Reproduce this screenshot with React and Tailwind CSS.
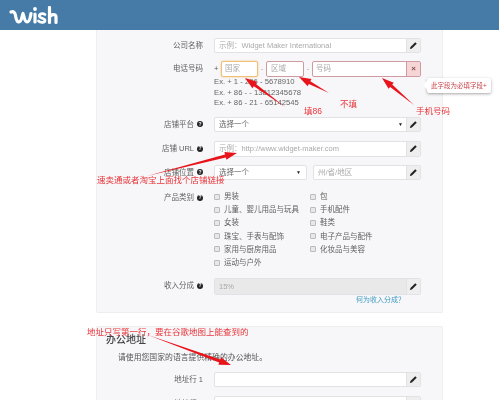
const cjk = { fontFamily: '"Liberation Sans","Noto Sans CJK SC",sans-serif' };

function Pencil() {
  return (
    <svg width="9" height="9" viewBox="0 0 10 10" aria-hidden="true">
      <path d="M1 9 L1.6 6.8 L7 1.4 L8.6 3 L3.2 8.4 Z" fill="#222" />
    </svg>
  );
}

function Help() {
  return (
    <span className="ml-[3px] inline-flex h-[6px] w-[6px] items-center justify-center rounded-full bg-[#222] text-[5px] leading-none font-bold text-white">?</span>
  );
}

function Row({ label, help, children, className = "" }) {
  return (
    <div className={"flex items-start " + className}>
      <div className="flex h-[15.5px] w-[106px] items-center justify-end text-[7.5px] text-[#5f5f5f]">
        {label}
        {help && <Help />}
      </div>
      <div className="ml-[11px] w-[207px]">{children}</div>
    </div>
  );
}

function Field({ text, select, disabled, height = "h-[15.5px]" }) {
  return (
    <div className={"flex overflow-hidden rounded-[2px] border border-[#e2e2e6] bg-white " + height}>
      <div className={"flex flex-1 items-center justify-between pl-[4px] pr-[3px] text-[7.5px] " + (disabled ? "bg-[#e9e9e9] text-[#888] " : "") + (select ? "text-[#666]" : "text-[#aaa]")}>
        <span>{text}</span>
        {select && <span className="text-[5px] text-[#222]">▼</span>}
      </div>
      <div className="flex w-[14px] items-center justify-center border-l border-[#e2e2e6] bg-[#eeeeee]">
        <Pencil />
      </div>
    </div>
  );
}

function Check({ label }) {
  return (
    <div className="flex h-[13.2px] items-center text-[7.5px] text-[#5f5f5f]">
      <span className="mr-[4px] h-[6px] w-[6px] rounded-[1px] border border-[#bbb] bg-[#e8e8e8]" />
      {label}
    </div>
  );
}

const left = ["男装", "儿童、婴儿用品与玩具", "女装", "珠宝、手表与配饰", "家用与厨房用品", "运动与户外"];
const right = ["包", "手机配件", "鞋类", "电子产品与配件", "化妆品与美容"];

function Arrow({ x1, y1, x2, y2 }) {
  const dx = x2 - x1, dy = y2 - y1, l = Math.hypot(dx, dy);
  const ux = dx / l, uy = dy / l, nx = -uy, ny = ux;
  const bx = x2 - ux * 12, by = y2 - uy * 12;
  const p = [
    [x1, y1],
    [bx + nx * 1.6, by + ny * 1.6],
    [bx + nx * 4, by + ny * 4],
    [x2, y2],
    [bx - nx * 4, by - ny * 4],
    [bx - nx * 1.6, by - ny * 1.6],
  ].map((q) => q.map((v) => v.toFixed(1)).join(",")).join(" ");
  return <polygon points={p} fill="#e8141c" />;
}

function Note({ className, children }) {
  return <div className={"absolute whitespace-nowrap text-[8.5px] leading-none text-[#e8343a] " + className}>{children}</div>;
}

export default function App() {
  return (
    <div className="relative h-[400px] w-[499px] overflow-hidden bg-white blur-[0.3px]" style={cjk}>
      <header className="flex h-[30px] items-center bg-[#457ba6] pl-[9px]">
        <svg width="49" height="19" viewBox="0 0 49 19" fill="none" stroke="#fff" strokeLinecap="round" strokeLinejoin="round" aria-label="wish">
          <path d="M2 6 C4.500 5 6 6.500 6.500 9.500 C7 13 8 16 10 16 C12.500 16 13 10 14 7.500 C15 10 15.500 16 18 16 C20.500 16 21.500 11 22 7.500" strokeWidth="3.200" />
          <path d="M26 8 V16" strokeWidth="3.200" />
          <path d="M36 8.500 C34 7 29.500 7.500 30.500 10.500 C31 12.500 36 12 36 14.500 C36 16.800 31.500 16.800 29.500 15" strokeWidth="2.800" />
          <path d="M40.500 1.500 V16.500 M40.500 11 C42 8 47 7.500 47 11 V16.500" strokeWidth="3.200" />
          <circle cx="26" cy="3" r="1.900" fill="#fff" stroke="none" />
        </svg>
      </header>

      <main className="ml-[96px] w-[347px]">
        <section className="h-[283px] rounded-b-[2px] border-x border-b border-[#eeeeee] bg-[#f7f7f9] pt-[7.5px]">
          <Row label="公司名称">
            <Field text="示例：Widget Maker International" />
          </Row>

          <Row label="电话号码" className="mt-[8px]">
            <div className="flex h-[16px] items-center text-[7.5px] text-[#999]">
              <span className="w-[7px] text-[#555]">+</span>
              <div className="flex h-full w-[37px] items-center rounded-[2px] border border-[#f0c078] bg-white pl-[3px] text-[#aaa] shadow-[0_0_2px_#f0c078]">国家</div>
              <span className="w-[8px] text-center">-</span>
              <div className="flex h-full w-[38px] items-center rounded-[2px] border border-[#cf9aa0] bg-white pl-[4px] text-[#aaa]">区域</div>
              <span className="w-[8px] text-center">-</span>
              <div className="flex h-full flex-1 overflow-hidden rounded-[2px] border border-[#cf9aa0] bg-white">
                <div className="flex flex-1 items-center pl-[3px] text-[#aaa]">号码</div>
                <div className="flex w-[14px] items-center justify-center border-l border-[#cf9aa0] bg-[#f5d5d5] text-[8px] font-bold text-[#8a4a4a]">×</div>
              </div>
            </div>
            <div className="text-[7.7px] leading-[10.500px] text-[#666]">
              <div>Ex. + 1 - 206 - 5678910</div>
              <div>Ex. + 86 - - 13812345678</div>
              <div>Ex. + 86 - 21 - 65142545</div>
            </div>
          </Row>

          <Row label="店铺平台" help className="mt-[8px]">
            <Field text="选择一个" select />
          </Row>

          <Row label="店铺 URL" help className="mt-[9px]">
            <Field text="示例：http://www.widget-maker.com" />
          </Row>

          <Row label="店铺位置" help className="mt-[8px]">
            <div className="flex gap-[6px]">
              <div className="flex h-[15.5px] w-[93px] items-center justify-between rounded-[2px] border border-[#e2e2e6] bg-white pl-[4px] pr-[5px] text-[7.500px] text-[#666]">
                <span>选择一个</span>
                <span className="text-[5px] text-[#222]">▼</span>
              </div>
              <div className="flex-1">
                <Field text="州/省/地区" />
              </div>
            </div>
          </Row>

          <Row label="产品类别" help className="mt-[10px]">
            <div className="flex">
              <div className="w-[96px]">
                {left.map((t) => <Check key={t} label={t} />)}
              </div>
              <div>
                {right.map((t) => <Check key={t} label={t} />)}
              </div>
            </div>
          </Row>

          <Row label="收入分成" help className="mt-[9px]">
            <Field text="15%" disabled height="h-[17px]" />
            <div className="pr-[16px] text-right text-[7px] leading-[10px] text-[#3d9bc0]">何为收入分成？</div>
          </Row>
        </section>

        <section className="mt-[13px] h-[80px] rounded-t-[2px] border-x border-t border-[#eeeeee] bg-[#f7f7f9] pt-[6px]">
          <h2 className="pl-[9px] text-[10px] leading-[14px] font-medium text-[#444]">办公地址</h2>
          <p className="mt-[5px] pl-[21px] text-[7.85px] leading-[11px] text-[#555]">请使用您国家的语言提供精确的办公地址。</p>
          <Row label="地址行 1" className="mt-[8.5px]">
            <Field text="" />
          </Row>
          <Row label="地址行 2" className="mt-[9px]">
            <Field text="" />
          </Row>
        </section>
      </main>

      <svg className="pointer-events-none absolute top-0 left-0" width="499" height="400" viewBox="0 0 499 400">
        <Arrow x1={285} y1={107} x2={245} y2={78} />
        <Arrow x1={329} y1={93} x2={299} y2={77} />
        <Arrow x1={414} y1={105} x2={382} y2={78} />
        <Arrow x1={147} y1={176} x2={237} y2={153} />
        <Arrow x1={148} y1={335} x2={231} y2={365} />
      </svg>

      <Note className="top-[107px] left-[304px]">填86</Note>
      <Note className="top-[100px] left-[340px]">不填</Note>
      <Note className="top-[107px] left-[416px]">手机号码</Note>
      <Note className="top-[176px] left-[97px]">速卖通或者淘宝上面找个店铺链接</Note>
      <Note className="top-[328px] left-[87px]">地址只写第一行，要在谷歌地图上能查到的</Note>

      <div className="absolute top-[78px] left-[427px] flex h-[15px] w-[64px] items-center justify-center rounded-[2px] bg-white text-[6.500px] whitespace-nowrap text-[#c9444c] shadow-[0_1px_3px_rgba(0,0,0,0.35)]">
        <span className="absolute top-[4px] left-[-3px] h-[6px] w-[6px] rotate-45 bg-white" />
        此字段为必填字段+
      </div>
    </div>
  );
}
